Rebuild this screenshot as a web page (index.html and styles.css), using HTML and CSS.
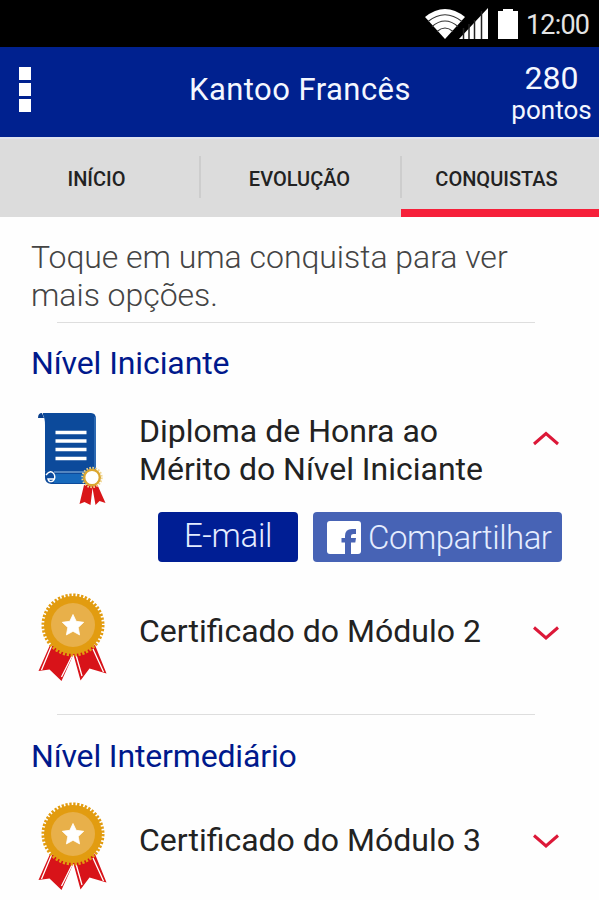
FILE: index.html
```html
<!DOCTYPE html>
<html lang="pt-BR">
<head>
<meta charset="utf-8">
<title>Kantoo Francês</title>
<link rel="stylesheet" href="styles.css">
</head>
<body>
<svg width="0" height="0" class="defs" aria-hidden="true">
  <defs>
    <symbol id="medal" viewBox="0 -2 72 94">
      <path d="M13 50L1.500 76l11-1.500 12 11.500L38 56z M36 58l7.500 27.500 9-12 17 5L58 50z" fill="#d81319"/>
      <path d="M14.500 51L4.500 75M35.500 60L24.500 82M39 60l6 21M56 54l10.500 23" stroke="#fff" stroke-width="1.300" fill="none"/>
      <circle cx="36" cy="30" r="29" fill="#e29c10"/>
      <circle cx="36" cy="30" r="29.700" fill="none" stroke="#e29c10" stroke-width="3.600" stroke-dasharray="2.300 1.588"/>
      <circle cx="36" cy="30" r="22" fill="#e8b04a"/>
      <path d="M36 19.500l3.200 6.800 7.500 1-5.500 5.200 1.400 7.400L36 36.300l-6.600 3.600 1.400-7.400-5.500-5.200 7.500-1z" fill="#fff" stroke="#fff" stroke-width=".8"/>
    </symbol>
  </defs>
</svg>

<div class="status">
  <svg class="wifi" width="40" height="30" viewBox="0 0 40 30">
    <path d="M0 8Q20-8 40 8L20 30z" fill="#fff"/>
    <path d="M3 12.500Q20-1 37 12.500M7 17.500Q20 6.500 33 17.500M12 22.500Q20 15.500 28 22.500" fill="none" stroke="#333" stroke-width="1.200"/>
  </svg>
  <svg class="signal" width="29" height="31" viewBox="0 0 29 31">
    <path d="M29 0v31H0z" fill="#fff"/>
    <path d="M4.500 20v11M10 16v15M15.500 12v19M22.500 3v28" stroke="#222" stroke-width="1.500"/>
  </svg>
  <svg class="battery" width="20" height="30" viewBox="0 0 20 30">
    <path d="M0 2h5V0h10v2h5v28H0z" fill="#fff"/>
  </svg>
  <span class="clock">12:00</span>
</div>

<header class="appbar">
  <div class="menu"><i></i><i></i><i></i></div>
  <h1>Kantoo Francês</h1>
  <div class="score"><b>280</b><span>pontos</span></div>
</header>

<nav class="tabs">
  <div class="tab inicio"><span>INÍCIO</span></div>
  <div class="tab evolucao"><span>EVOLUÇÃO</span></div>
  <div class="tab active"><span>CONQUISTAS</span></div>
</nav>

<main>
  <p class="hint">Toque em uma conquista para ver<br>mais opções.</p>
  <hr>
  <h2>Nível Iniciante</h2>

  <div class="item diploma">
    <svg class="icon" width="72" height="96" viewBox="0 0 72 96">
      <path d="M6 2h48q5 0 5 6v52H8V14Q8 7 6 4z" fill="#0c4a9b"/>
      <path d="M1 7q0-5 4-5l2 5z" fill="#0a3f8b"/>
      <path d="M58 6v54" stroke="#3775ba" stroke-width="1.500"/>
      <path d="M18.500 21.500h31M18.500 30h31M18.500 38.500h31M18.500 47.500h31" stroke="#fff" stroke-width="3.600"/>
      <path d="M8 61q0-3 5-3h46v15H14q-6-1-6-6z" fill="#0c4a9b"/>
      <path d="M17 63h42v9H17z" fill="#1769bc"/>
      <path d="M17 61h36" stroke="#9bbfe4" stroke-width="1.200"/>
      <path d="M9 64q5-6 8-1 2 4-1 7-4 2-5-2h6" fill="none" stroke="#fff" stroke-width="1.400"/>
      <path d="M47 74l-4.500 19 5-2 6 3 2-17 3 17 4-4 6 2-8-18z" fill="#d91619"/>
      <circle cx="55" cy="66.500" r="9.700" fill="none" stroke="#f0d692" stroke-width="2" stroke-dasharray="1.600 1.450"/>
      <circle cx="55" cy="66.500" r="7.800" fill="#fff" stroke="#dba62f" stroke-width="2.400"/>
    </svg>
    <div class="label">Diploma de Honra ao<br>Mérito do Nível Iniciante</div>
    <svg class="chev" width="28" height="16" viewBox="0 0 28 16"><path d="M2 13L14 2.500 26 13" fill="none" stroke="#dc1838" stroke-width="3"/></svg>
  </div>

  <div class="actions">
    <div class="btn email"><span>E-mail</span></div>
    <div class="btn share">
      <svg width="35" height="34" viewBox="0 0 35 34">
        <rect y="1" width="34" height="33" rx="3" fill="#fff"/>
        <path d="M18 34V22.500h-3.500v-4.500H18v-2Q18 9 25 9h4v5h-2.500Q24 14 24 16v2h5l-.7 4.500H24V34z" fill="#4863b4"/>
      </svg>
      <span>Compartilhar</span>
    </div>
  </div>

  <div class="item cert">
    <svg class="icon" width="72" height="94"><use href="#medal"/></svg>
    <div class="label">Certificado do Módulo 2</div>
    <svg class="chev" width="28" height="16" viewBox="0 0 28 16"><path d="M2 2.500L14 13 26 2.500" fill="none" stroke="#dc1838" stroke-width="3"/></svg>
  </div>

  <hr class="second">
  <h2 class="mid">Nível Intermediário</h2>

  <div class="item cert last">
    <svg class="icon" width="72" height="94"><use href="#medal"/></svg>
    <div class="label">Certificado do Módulo 3</div>
    <svg class="chev" width="28" height="16" viewBox="0 0 28 16"><path d="M2 2.500L14 13 26 2.500" fill="none" stroke="#dc1838" stroke-width="3"/></svg>
  </div>
</main>
</body>
</html>
```
FILE: styles.css
```css
* { box-sizing: border-box; margin: 0; padding: 0; }
html, body { height: 900px; overflow: hidden; }
body { width: 599px; background: #fefefe; font-family: Roboto, sans-serif; color: #222; }
svg { display: block; flex: none; }
span { white-space: nowrap; }
.defs { position: absolute; }

.status { height: 47px; background: #000; display: flex; align-items: flex-start; padding-left: 425px; }
.wifi { margin-top: 9px; }
.signal { margin: 8px 0 0 -6px; }
.battery { margin: 9px 0 0 10px; }
.clock { color: #e4e4e4; font-size: 27px; line-height: 32px; margin: 9px 0 0 8px; letter-spacing: -0.8px; }

.appbar { height: 90px; background: #00218f; display: flex; color: #f4f7ff; }
.menu { width: 189px; padding: 20px 0 0 19px; display: flex; flex-direction: column; gap: 3px; }
.menu i { width: 12px; height: 13px; background: #fff; }
h1 { width: 315px; font-size: 31px; line-height: 36px; font-weight: 400; letter-spacing: 0.45px; padding-top: 25px; white-space: nowrap; }
.score { width: 95px; text-align: center; padding-top: 13px; }
.score b { display: block; font-weight: 400; font-size: 32px; line-height: 37px; }
.score span { display: block; font-size: 26px; line-height: 26px; }

.tabs { height: 80px; background: #dcdcdc; border-top: 2px solid #dfe3ee; display: flex; }
.tab { display: flex; justify-content: center; align-items: center; font-size: 20px; font-weight: 500; color: #222; position: relative; padding-top: 2px; }
.inicio { width: 200px; padding-right: 7px; }
.evolucao { width: 201px; padding-right: 2px; }
.active { width: 198px; border-bottom: 8px solid #f6203a; padding: 10px 7px 0 0; }
.tab + .tab::before { content: ""; position: absolute; left: -1px; top: 17px; width: 2px; height: 42px; background: #cdcdcd; }

.hint { padding: 21px 0 0 31px; font-size: 32px; line-height: 38px; font-weight: 300; color: #444; height: 105px; letter-spacing: -0.03px; }
hr { border: 0; height: 1px; background: #dedede; margin: 0 64px 0 57px; }
h2 { padding: 21px 0 0 31px; font-size: 32px; line-height: 38px; font-weight: 400; color: #00198c; height: 88px; letter-spacing: -0.1px; }
.item { display: flex; align-items: flex-start; padding-left: 37px; }
.label { width: 396px; margin-left: 30px; font-size: 32px; line-height: 38px; color: #222; }
.chev { margin-left: -3px; }
.diploma { height: 101px; }
.diploma .label { padding-top: 1px; }
.diploma .chev { margin-top: 20px; }
.actions { display: flex; gap: 15px; padding-left: 158px; height: 83px; }
.btn { height: 50px; border-radius: 4px; display: flex; align-items: center; font-size: 33px; font-weight: 300; color: #e5edff; }
.email { width: 140px; background: #001e94; justify-content: center; padding-bottom: 3px; letter-spacing: -0.3px; }
.share { width: 249px; background: #4763b5; padding-left: 14px; gap: 6px; }
.share span { letter-spacing: -0.5px; }
.cert { height: 119px; }
.cert .icon { margin-top: -2px; }
.cert .label { padding-top: 17px; }
.cert .chev { margin-top: 30px; }
.mid { padding-top: 22px; letter-spacing: -0.15px; }
.last .icon, .last .label { position: relative; top: 1px; }
```
